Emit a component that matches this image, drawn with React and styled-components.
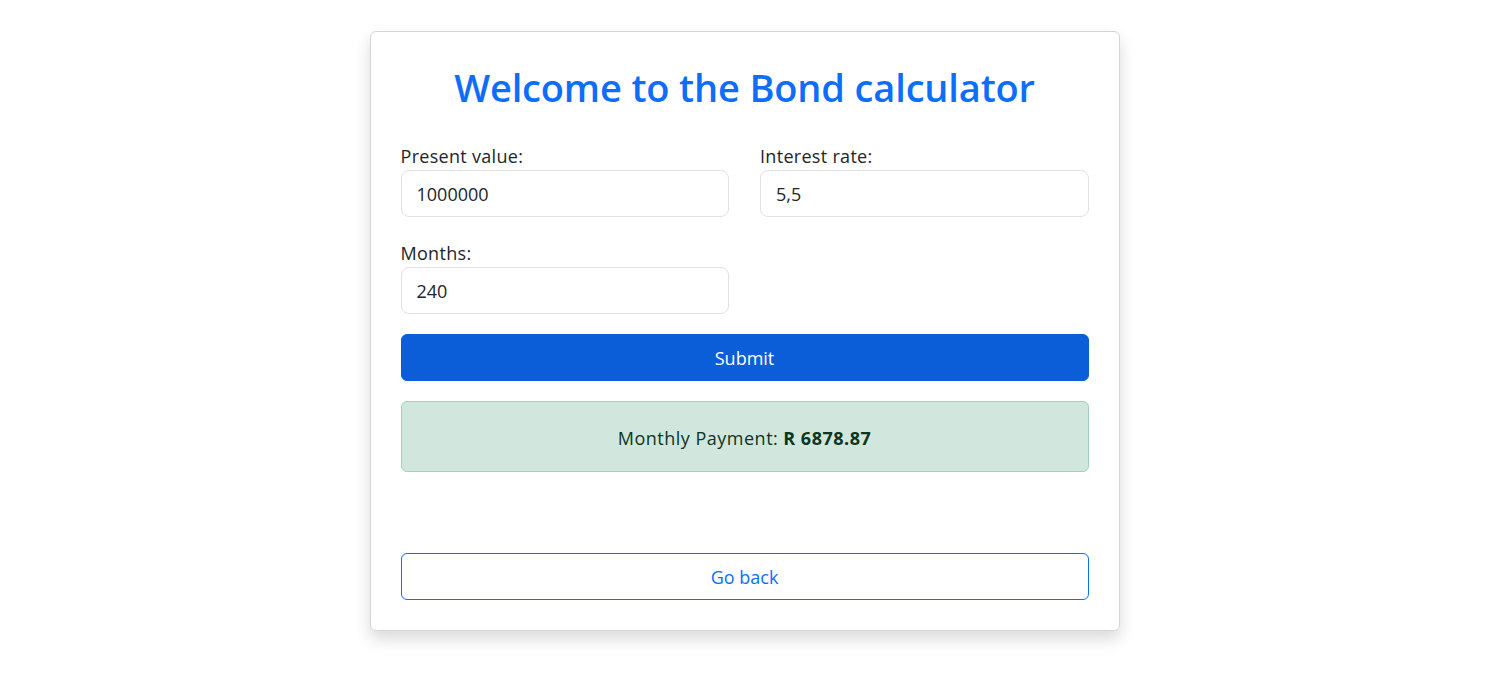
import React from "react";
import styled, { createGlobalStyle } from "styled-components";

const Global = createGlobalStyle`
  html, body {
    margin: 0;
    padding: 0;
    background: #fff;
    font-family: "Open Sans", "Noto Sans", Arial, sans-serif;
    color: #212529;
  }
  * { box-sizing: border-box; }
`;

const Page = styled.div`
  display: flex;
  justify-content: center;
  padding: 31px 17px 56px 0;
`;

const Card = styled.div`
  width: 750px;
  padding: 30px 30px 30px;
  background: #fff;
  border: 1px solid #d3d5d8;
  border-radius: 6px;
  box-shadow: 0 8px 16px rgba(0, 0, 0, 0.15);
`;

const Title = styled.h1`
  margin: 1px 0 32px;
  font-size: 38px;
  font-weight: 600;
  line-height: 48px;
  text-align: center;
  color: #0d6efd;
  letter-spacing: -0.15px;
`;

const Grid = styled.div`
  display: grid;
  grid-template-columns: 1fr 1fr;
  column-gap: 31px;
  row-gap: 23px;
`;

const Field = styled.div`
  display: flex;
  flex-direction: column;
`;

const Label = styled.label`
  font-size: 18px;
  line-height: 27px;
  color: #212529;
  letter-spacing: 0.3px;
`;

const Input = styled.input`
  height: 47px;
  padding: 0 15px;
  border: 1px solid #dee2e6;
  border-radius: 8px;
  font: inherit;
  font-size: 18px;
  color: #212529;
  outline: none;
`;

const Button = styled.button`
  width: 100%;
  height: 47px;
  border-radius: 6px;
  font: inherit;
  font-size: 18px;
  cursor: pointer;
  border: 1px solid ${(p) => (p.$outline ? "#0d6efd" : "#0b5ed7")};
  background: ${(p) => (p.$outline ? "#fff" : "#0b5ed7")};
  color: ${(p) => (p.$outline ? "#0d6efd" : "#fff")};
`;

const SubmitRow = styled.div`
  margin-top: 20px;
`;

const Alert = styled.div`
  margin-top: 20px;
  height: 71px;
  display: flex;
  align-items: center;
  justify-content: center;
  background: #d1e7dd;
  border: 1px solid #a3cfbb;
  border-radius: 6px;
  color: #0a3622;
  font-size: 18px;
  letter-spacing: 0.5px;
  padding-top: 3px;

  b {
    font-weight: 700;
    margin-left: 5px;
  }
`;

const Footer = styled.div`
  margin-top: 81px;
`;

export default function App() {
  return (
    <>
      <Global />
      <Page>
        <Card>
          <Title>Welcome to the Bond calculator</Title>
          <Grid>
            <Field>
              <Label>Present value:</Label>
              <Input defaultValue="1000000" />
            </Field>
            <Field>
              <Label>Interest rate:</Label>
              <Input defaultValue="5,5" />
            </Field>
            <Field>
              <Label>Months:</Label>
              <Input defaultValue="240" />
            </Field>
          </Grid>
          <SubmitRow>
            <Button>Submit</Button>
          </SubmitRow>
          <Alert>
            Monthly Payment: <b>R 6878.87</b>
          </Alert>
          <Footer>
            <Button $outline>Go back</Button>
          </Footer>
        </Card>
      </Page>
    </>
  );
}
